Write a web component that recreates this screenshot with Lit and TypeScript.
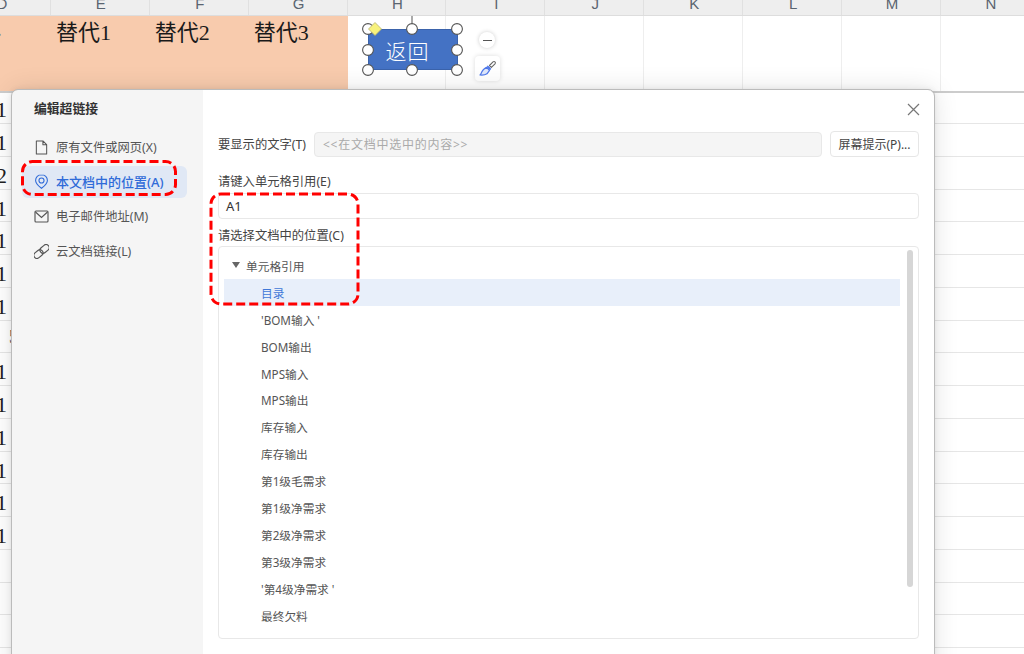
import { LitElement, html, css, svg } from "lit";
import { customElement } from "lit/decorators.js";

const COLS = ["D", "E", "F", "G", "H", "I", "J", "K", "L", "M", "N"];
const ROWS = ["1", "1", "2", "1", "1", "1", "1", "5", "1", "1", "1", "1", "1", "1", "", "", "", ""];
const TREE = ["'BOM输入 '", "BOM输出", "MPS输入", "MPS输出", "库存输入", "库存输出", "第1级毛需求", "第1级净需求", "第2级净需求", "第3级净需求", "'第4级净需求 '", "最终欠料"];

const fileIcon = svg`<path d="M2 1h7l4 4v10H2z M9 1v4h4" fill="none" stroke="currentColor" stroke-width="1.1" stroke-linejoin="round"/>`;
const pinIcon = svg`<path d="M7.500 .8C3.800 .8 1.200 3.500 1.200 6.800c0 3.500 3.300 6 6.300 8.400 3-2.400 6.300-4.900 6.300-8.400C13.800 3.500 11.200 .8 7.500 .8z" fill="none" stroke="currentColor" stroke-width="1.150"/><circle cx="7.500" cy="6.900" r="2.700" fill="none" stroke="currentColor" stroke-width="1.150"/>`;
const mailIcon = svg`<rect x="1" y="2" width="13" height="11" rx="1" fill="none" stroke="currentColor" stroke-width="1.150"/><path d="M1.500 3l6 5.500 6-5.500" fill="none" stroke="currentColor" stroke-width="1.150"/>`;
const linkIcon = svg`<g fill="none" stroke="currentColor" stroke-width="1.150" transform="rotate(-40 7.500 7.500)"><rect x="-1.500" y="4.400" width="10" height="6.200" rx="3.100"/><rect x="6.500" y="4.400" width="10" height="6.200" rx="3.100"/></g>`;

@customElement("app-root")
export class AppRoot extends LitElement {
  static styles = css`
    :host {
      display: block;
      position: relative;
      width: 1024px;
      height: 654px;
      overflow: hidden;
      background: #fff;
      font-family: "Noto Sans", "Noto Sans CJK SC", sans-serif;
      color: #444;
    }
    .sheet { margin-left: -48px; width: 1120px; }
    .head, .band { display: grid; grid-template-columns: repeat(11, 98.9px); }
    .head { height: 16px; background: #eee; overflow: hidden; border-bottom: 1px solid #ddd; box-sizing: border-box; }
    .hcell {
      text-align: center; font: 15px/8px "Liberation Sans", sans-serif; color: #5a6470;
      border-right: 1px solid #e0e0e0; height: 16px; box-sizing: border-box; padding-left: 2px;
    }
    .band { height: 77px; box-sizing: border-box; border-bottom: 2px solid #ccc; }
    .bcell { border-right: 1px solid #eee; }
    .peach {
      background: #f8cbad; border-right: 0; padding: 4px 0 0 5px;
      font: 22px/26px "Liberation Serif", "Noto Sans CJK SC", serif; color: #1a1a1a;
    }
    .rows { margin-top: -1.75px; }
    .row {
      height: 32.75px; box-sizing: border-box; border-bottom: 1px solid #e6e6e6;
      font: 22px/32px "Liberation Serif", serif; color: #222;
    }
    .num { display: block; width: 98.9px; text-align: center; padding-top: 3px; box-sizing: border-box; }
    .frag { display: block; padding-left: 57px; font-size: 18px; line-height: 26px; padding-top: 3px; color: #444; }

    .shape {
      position: absolute; left: 368px; top: 29px; width: 90px; height: 41px; box-sizing: border-box;
      background: #4472c4; border: 1px solid #3b63ab; display: flex; align-items: center; justify-content: center;
      font: 21px/1 "Noto Sans CJK SC", serif; color: #fff; letter-spacing: 1px; font-weight: 300; padding: 2px 11px 0 0;
    }
    .handles { position: absolute; left: 355px; top: 10px; width: 120px; height: 75px; }
    .minus {
      position: absolute; left: 479px; top: 32px; width: 16px; height: 16px; border-radius: 50%;
      background: #fff; box-shadow: 0 0 4px rgba(0,0,0,.2); display: flex; align-items: center; justify-content: center;
    }
    .minus i { display: block; width: 9px; height: 1px; background: #555; }
    .brush {
      position: absolute; left: 475px; top: 56px; width: 25px; height: 25px; border-radius: 4px;
      background: #fff; box-shadow: 0 0 5px rgba(0,0,0,.14); display: flex; align-items: center; justify-content: center;
    }

    .dialog {
      position: absolute; left: 12px; top: 90px; width: 922px; height: 590px; box-sizing: border-box;
      display: flex; background: #fff; border-radius: 6px 6px 0 0;
      outline: 1px solid #bbb; box-shadow: 0 0 6px rgba(0,0,0,.1), 0 0 26px rgba(0,0,0,.12);
      font-size: 12.3px;
    }
    .side { width: 191px; flex: none; background: #f5f5f5; border-radius: 6px 0 0 0; padding: 8px 16px 0 10px; box-sizing: border-box; }
    .title { font-size: 12.8px; font-weight: 700; color: #333; line-height: 20px; margin: 0 0 13px 12px; }
    .nav { display: flex; flex-direction: column; gap: 2.7px; }
    .item { display: flex; align-items: center; gap: 7px; height: 32px; padding-left: 12px; border-radius: 6px; color: #555; white-space: nowrap; }
    .item svg { width: 15px; height: 15px; flex: none; }
    .item.on { background: #e0e8f5; color: #2f6bd8; font-weight: 500; font-size: 13px; }

    .main { flex: 1; min-width: 0; position: relative; padding: 41px 15px 0; box-sizing: border-box; }
    .close { position: absolute; right: 14px; top: 13px; width: 13px; height: 13px; color: #777; }
    .line1 { display: flex; align-items: center; gap: 8px; height: 26px; }
    .lab { color: #444; white-space: nowrap; line-height: 20px; }
    .line1 .lab { padding-top: 2px; }
    .ro {
      flex: 1; height: 25px; box-sizing: border-box; border: 1px solid #e8e8e8; background: #f5f5f5; border-radius: 4px;
      color: #aaa; padding-left: 8px; line-height: 23px; letter-spacing: .75px; font-size: 12px;
    }
    .btn {
      width: 89px; height: 26px; box-sizing: border-box; border: 1px solid #e6e6e6; border-radius: 4px; background: #fff;
      text-align: center; line-height: 26px; color: #444; font-size: 12px; white-space: nowrap;
    }
    .lab2 { margin-top: 15px; margin-bottom: 1px; }
    .lab3 { margin-top: 7px; margin-bottom: 0; }
    .field {
      height: 26px; box-sizing: border-box; border: 1px solid #e8e8e8; border-radius: 4px; padding-left: 7px;
      line-height: 24px; color: #333; font-size: 13px;
    }
    .list {
      position: relative; height: 393px; box-sizing: border-box; border: 1px solid #e8e8e8; border-radius: 4px;
      padding: 5px 18px 0 5px; font-size: 11.7px; color: #555;
    }
    .tnode { height: 26.92px; display: flex; align-items: center; white-space: nowrap; }
    .tnode.root { padding-left: 8px; gap: 6px; }
    .tnode.leaf { padding-left: 37px; }
    .tnode.sel { background: #e8effa; color: #3f78d8; }
    .tri { width: 0; height: 0; border-left: 4px solid transparent; border-right: 4px solid transparent; border-top: 6px solid #666; }
    .scroll { position: absolute; right: 5px; top: 3px; width: 6px; height: 337px; border-radius: 3px; background: #d6d6d6; }

    .mark { position: absolute; left: 0; top: 0; width: 1024px; height: 654px; pointer-events: none; }
  `;

  private handle(x: number, y: number) {
    return svg`<circle cx=${x} cy=${y} r="5.4" fill="#fff" stroke="#555" stroke-width="1.1"/>`;
  }

  render() {
    const hs = [[13, 19], [57, 19], [102, 19], [13, 40], [102, 40], [13, 60], [57, 60], [102, 60]];
    return html`
      <div class="sheet">
        <div class="head">${COLS.map((c) => html`<div class="hcell">${c}</div>`)}</div>
        <div class="band">
          <div class="peach">主料</div>
          <div class="peach">替代1</div>
          <div class="peach">替代2</div>
          <div class="peach">替代3</div>
          ${COLS.slice(4).map(() => html`<div class="bcell"></div>`)}
        </div>
        <div class="rows">
          ${ROWS.map((r, i) => html`<div class="row"><span class=${i === 7 ? "frag" : "num"}>${r}</span></div>`)}
        </div>
      </div>

      <div class="shape">返回</div>
      <svg class="handles" viewBox="0 0 120 75">
        <line x1="57" y1="6" x2="57" y2="14" stroke="#555" stroke-width="1"/>
        ${hs.map(([x, y]) => this.handle(x, y))}
        <path d="M20 12.500l6.500 6.500-6.500 6.500-6.500-6.500z" fill="#f7f17c" stroke="#b5b070" stroke-width=".8"/>
      </svg>
      <div class="minus"><i></i></div>
      <div class="brush">
        <svg width="19" height="19" viewBox="0 0 19 19">
          <path d="M11.500 6.500l3.500-3.600c.6-.6 1.500-.6 2 0 .5.500.5 1.300 0 1.900l-3.600 3.500z" fill="#fff" stroke="#666" stroke-width="1.100" stroke-linejoin="round"/>
          <path d="M10 6.800l3 3-1.300 1.300-3-3z" fill="#4f78ea" stroke="#4f78ea" stroke-width=".8"/>
          <path d="M8.500 8.300l3 3-2.500 3.500c-1.600 1-4.400 1.500-7 1.200 1-.8 1.400-2 1.900-3.300.6-1.600 2.800-3.200 4.600-4.400z" fill="#dfe7fb" stroke="#4f78ea" stroke-width="1.200" stroke-linejoin="round"/>
        </svg>
      </div>

      <div class="dialog">
        <div class="side">
          <div class="title">编辑超链接</div>
          <div class="nav">
            <div class="item"><svg viewBox="0 0 15 16">${fileIcon}</svg>原有文件或网页(X)</div>
            <div class="item on"><svg viewBox="0 0 15 16">${pinIcon}</svg>本文档中的位置(A)</div>
            <div class="item"><svg viewBox="0 0 15 15">${mailIcon}</svg>电子邮件地址(M)</div>
            <div class="item"><svg viewBox="0 0 15 15">${linkIcon}</svg>云文档链接(L)</div>
          </div>
        </div>
        <div class="main">
          <svg class="close" viewBox="0 0 13 13"><path d="M1 1l11 11M12 1L1 12" stroke="currentColor" stroke-width="1.2" fill="none"/></svg>
          <div class="line1">
            <span class="lab">要显示的文字(T)</span>
            <div class="ro">&lt;&lt;在文档中选中的内容&gt;&gt;</div>
            <div class="btn">屏幕提示(P)...</div>
          </div>
          <div class="lab lab2">请键入单元格引用(E)</div>
          <div class="field">A1</div>
          <div class="lab lab3">请选择文档中的位置(C)</div>
          <div class="list">
            <div class="tnode root"><span class="tri"></span>单元格引用</div>
            <div class="tnode leaf sel">目录</div>
            ${TREE.map((t) => html`<div class="tnode leaf">${t}</div>`)}
            <div class="scroll"></div>
          </div>
        </div>
      </div>

      <svg class="mark" viewBox="0 0 1024 654">
        <rect x="22.500" y="161.500" width="153" height="33" rx="10" fill="none" stroke="#f00" stroke-width="3" stroke-dasharray="9 4"/>
        <rect x="211" y="194" width="147" height="110" rx="10" fill="none" stroke="#f00" stroke-width="3" stroke-dasharray="9 4"/>
      </svg>
    `;
  }
}
